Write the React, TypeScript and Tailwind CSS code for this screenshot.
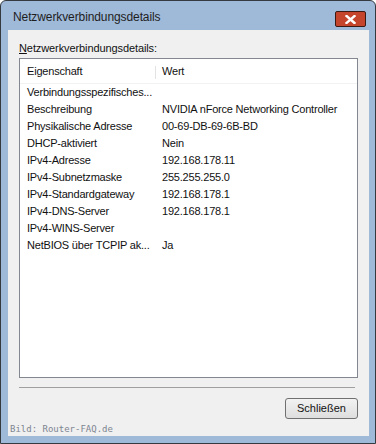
import React from "react";

const rows: [string, string][] = [
  ["Verbindungsspezifisches...", ""],
  ["Beschreibung", "NVIDIA nForce Networking Controller"],
  ["Physikalische Adresse", "00-69-DB-69-6B-BD"],
  ["DHCP-aktiviert", "Nein"],
  ["IPv4-Adresse", "192.168.178.11"],
  ["IPv4-Subnetzmaske", "255.255.255.0"],
  ["IPv4-Standardgateway", "192.168.178.1"],
  ["IPv4-DNS-Server", "192.168.178.1"],
  ["IPv4-WINS-Server", ""],
  ["NetBIOS über TCPIP ak...", "Ja"],
];

export default function App() {
  return (
    <div
      className="w-[376px] h-[444px] bg-white"
      style={{ fontFamily: '"Liberation Sans", Arial, sans-serif' }}
    >
      <div className="w-[376px] h-[444px] border border-[#343a40] rounded-t-[6px] bg-[#9fb9d9] flex flex-col">
        {/* Title bar */}
        <div className="h-[29px] flex items-center pl-[12px] pr-[9px] shrink-0">
          <span className="text-[12px] text-[#1e1e1e] flex-1 pt-[2px] tracking-[-0.1px]">
            Netzwerkverbindungsdetails
          </span>
          <div className="w-[31px] h-[16px] mt-[7px] bg-[#c4442c] border border-[#3b1a14] rounded-[2px] flex items-center justify-center">
            <svg width="11" height="9" viewBox="0 0 11 9">
              <path
                d="M1.5 1 L9.5 8 M9.5 1 L1.5 8"
                stroke="#ffffff"
                strokeWidth="2.4"
                strokeLinecap="square"
              />
            </svg>
          </div>
        </div>
        {/* Client */}
        <div className="ml-[7px] w-[361px] h-[406px] bg-[#f0f0f0] flex flex-col">
          <div className="pl-[11px] pt-[12px] h-[28px] text-[11px] text-[#111] leading-[13px] tracking-[-0.1px]">
            <span className="underline">N</span>etzwerkverbindungsdetails:
          </div>
          <div className="ml-[11px] w-[339px] h-[322px] border border-[#828790] bg-white flex flex-col tracking-[-0.2px]">
            <div className="h-[25px] flex items-center text-[11px] text-[#111] border-b border-[#f2f2f2] shrink-0">
              <div className="w-[135px] pl-[7px] flex items-center">Eigenschaft</div>
              <div className="w-[1px] h-[13px] bg-[#e3e3e3] mt-[3px]" />
              <div className="pl-[6px] flex-1 flex items-center">Wert</div>
            </div>
            <div className="flex flex-col">
              {rows.map(([k, v]) => (
                <div key={k} className="h-[17px] flex items-center text-[11px] text-[#111]">
                  <div className="w-[136px] pl-[7px] whitespace-nowrap overflow-hidden">{k}</div>
                  <div className="pl-[6px] whitespace-nowrap">{v}</div>
                </div>
              ))}
            </div>
          </div>
          <div className="ml-[11px] mt-[9px] w-[336px] h-[1px] bg-[#a0a0a0]" />
          <div className="flex justify-end pr-[11px] mt-[10px]">
            <button className="w-[73px] h-[21px] border border-[#707070] rounded-[3px] bg-gradient-to-b from-[#f2f2f2] to-[#dedede] text-[11px] text-[#111] flex items-center justify-center">
              Schließen
            </button>
          </div>
          <div
            className="pl-[2px] mt-[4px] text-[9px] text-[#7d8590]"
            style={{ fontFamily: '"DejaVu Sans Mono", monospace' }}
          >
            Bild: Router-FAQ.de
          </div>
        </div>
      </div>
    </div>
  );
}
